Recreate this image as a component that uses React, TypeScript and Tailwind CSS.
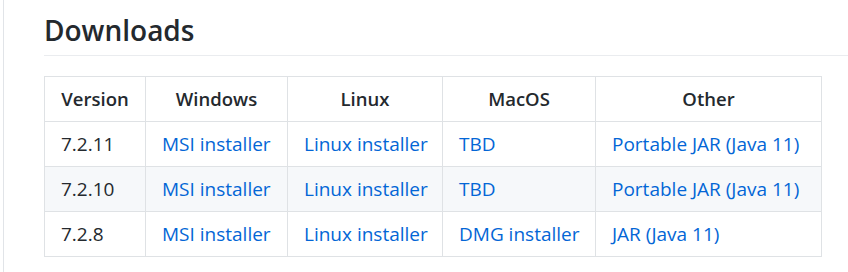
const rows = [
  { version: '7.2.11', mac: 'TBD', other: 'Portable JAR (Java 11)' },
  { version: '7.2.10', mac: 'TBD', other: 'Portable JAR (Java 11)' },
  { version: '7.2.8', mac: 'DMG installer', other: 'JAR (Java 11)' },
]

const headers = [
  { label: 'Version', width: 'w-[101px]' },
  { label: 'Windows', width: 'w-[142px]' },
  { label: 'Linux', width: 'w-[155px]' },
  { label: 'MacOS', width: 'w-[153px]' },
  { label: 'Other', width: 'w-[226px]' },
]

const cell = 'border border-[#dfe2e5] px-4 py-[8px] whitespace-nowrap'

export default function App() {
  return (
    <div className="h-[272px] w-[848px] overflow-hidden bg-white font-['Open_Sans',sans-serif] text-[#24292e]">
      <div className="ml-[3px] h-full border-l border-[#e1e4e8] pl-[40px] pt-[12px]">
        <h2 className="border-b border-[#eaecef] pb-[7px] text-[28px] font-semibold leading-[36px]">Downloads</h2>
        <table className="mt-[20px] w-[778px] table-fixed border-collapse text-[19px] leading-[28px]">
          <thead>
            <tr>
              {headers.map((h) => (
                <th key={h.label} className={`${h.width} ${cell} text-center text-[18.5px] font-semibold`}>
                  {h.label}
                </th>
              ))}
            </tr>
          </thead>
          <tbody>
            {rows.map((r, i) => (
              <tr key={r.version} className={i % 2 === 1 ? 'bg-[#f6f8fa]' : 'bg-white'}>
                <td className={cell}>{r.version}</td>
                <td className={`${cell} text-[#0366d6]`}>MSI installer</td>
                <td className={`${cell} text-[#0366d6]`}>Linux installer</td>
                <td className={`${cell} text-[#0366d6]`}>{r.mac}</td>
                <td className={`${cell} text-[#0366d6]`}>{r.other}</td>
              </tr>
            ))}
          </tbody>
        </table>
      </div>
    </div>
  )
}
